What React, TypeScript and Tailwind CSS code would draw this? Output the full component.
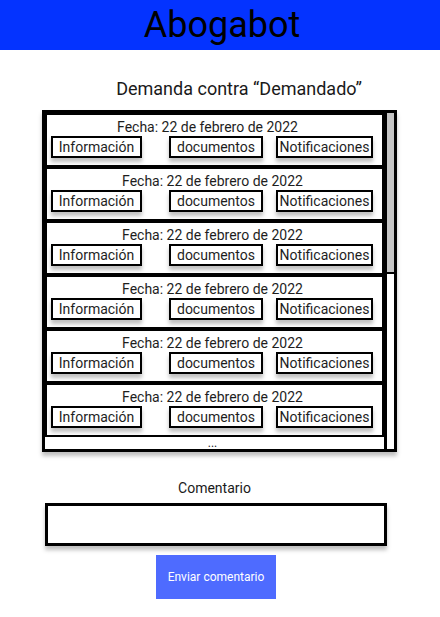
import React from "react";

const cards = [
  { fecha: "Fecha: 22 de febrero de 2022", shift: "pr-[14px]" },
  { fecha: "Fecha: 22 de febrero de 2022", shift: "pr-[4px]" },
  { fecha: "Fecha: 22 de febrero de 2022", shift: "pr-[4px]" },
  { fecha: "Fecha: 22 de febrero de 2022", shift: "pr-[4px]" },
  { fecha: "Fecha: 22 de febrero de 2022", shift: "pr-[4px]" },
  { fecha: "Fecha: 22 de febrero de 2022", shift: "pr-[4px]" },
];

function CardButton({ label, width }: { label: string; width: string }) {
  return (
    <button
      className={`${width} h-[22px] border-2 border-black bg-white text-[14px] leading-[16px] text-[#1e1e1e] shadow-[0_4px_4px_rgba(0,0,0,0.25)] flex items-center justify-center`}
    >
      {label}
    </button>
  );
}

function DemandaCard({ fecha, shift }: { fecha: string; shift: string }) {
  return (
    <div className="h-[54px] border-2 border-black bg-white pt-[4px]">
      <p className={`text-center text-[14px] leading-[16px] text-[#1e1e1e] ${shift}`}>{fecha}</p>
      <div className="flex items-center pl-[4px] mt-[1px]">
        <CardButton label="Información" width="w-[91px]" />
        <div className="ml-[27px]">
          <CardButton label="documentos" width="w-[94px]" />
        </div>
        <div className="ml-[13px]">
          <CardButton label="Notificaciones" width="w-[97px]" />
        </div>
      </div>
    </div>
  );
}

export default function App() {
  return (
    <div className="w-[440px] h-[617px] bg-white font-['Roboto',sans-serif] overflow-hidden">
      <header className="h-[50px] bg-[#0433ff] flex items-center justify-center">
        <h1 className="text-[36px] leading-[44px] text-black pl-[4px]">Abogabot</h1>
      </header>

      <h2 className="mt-[28px] pl-[38px] text-center text-[18px] leading-[21px] text-[#1a1a1a]">
        Demanda contra “Demandado”
      </h2>

      <div className="mt-[11px] ml-[42px] w-[355px] h-[342px] border-[3px] border-black bg-white shadow-[0_4px_4px_rgba(0,0,0,0.25)] flex">
        <div className="w-[339px] flex flex-col">
          {cards.map((c, i) => (
            <DemandaCard key={i} fecha={c.fecha} shift={c.shift} />
          ))}
          <div className="h-[12px] flex items-center justify-center pr-[4px] text-[12px] leading-[12px] text-[#1e1e1e]">
            ...
          </div>
        </div>
        <div className="w-[10px] border-l-[3px] border-black flex flex-col">
          <div className="h-[161px] bg-[#c4c4c4] border-b-2 border-black" />
        </div>
      </div>

      <p className="mt-[28px] pr-[11px] text-center text-[14px] leading-[16px] text-[#1a1a1a]">Comentario</p>

      <div className="mt-[7px] ml-[45px] w-[342px] h-[43px] border-[3px] border-black bg-white shadow-[0_4px_4px_rgba(0,0,0,0.25)]" />

      <button className="mt-[9px] ml-[156px] w-[120px] h-[44px] bg-[#4e6bff] text-white text-[12px] leading-[14px] flex items-center justify-center">
        Enviar comentario
      </button>
    </div>
  );
}
